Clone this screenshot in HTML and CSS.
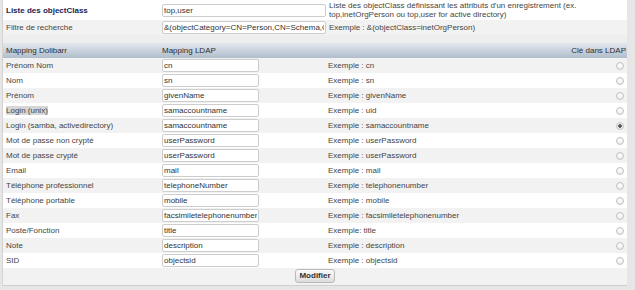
FILE: index.html
```html
<!DOCTYPE html>
<html lang="fr">
<head>
    <meta charset="UTF-8">
    <title>Configuration LDAP - Utilisateurs</title>
    <link rel="stylesheet" href="styles.css">
</head>
<body>
    <div class="panel">
        <table class="settings">
            <tr class="pair">
                <td class="label strong">Liste des objectClass</td>
                <td class="field"><input class="wide" type="text" value="top,user"></td>
                <td class="desc">Liste des objectClass définissant les attributs d'un enregistrement (ex. top,inetOrgPerson ou top,user for active directory)</td>
            </tr>
            <tr class="impair">
                <td class="label">Filtre de recherche</td>
                <td class="field"><input class="wide" type="text" value="&amp;(objectCategory=CN=Person,CN=Schema,CN=Configuration,DC=domain,DC=local)"></td>
                <td class="desc">Exemple : &amp;(objectClass=inetOrgPerson)</td>
            </tr>
        </table>

        <div class="spacer"></div>

        <table class="mapping">
            <tr class="liste_titre">
                <td class="label">Mapping Dolibarr</td>
                <td class="field">Mapping LDAP</td>
                <td class="desc"></td>
                <td class="key">Clé dans LDAP</td>
            </tr>
            <tr class="impair">
                <td class="label">Prénom Nom</td>
                <td class="field"><input type="text" value="cn"></td>
                <td class="desc">Exemple : cn</td>
                <td class="key"><input type="radio" name="key"></td>
            </tr>
            <tr class="pair">
                <td class="label">Nom</td>
                <td class="field"><input type="text" value="sn"></td>
                <td class="desc">Exemple : sn</td>
                <td class="key"><input type="radio" name="key"></td>
            </tr>
            <tr class="impair">
                <td class="label">Prénom</td>
                <td class="field"><input type="text" value="givenName"></td>
                <td class="desc">Exemple : givenName</td>
                <td class="key"><input type="radio" name="key"></td>
            </tr>
            <tr class="pair">
                <td class="label"><span class="marked">Login (unix)</span></td>
                <td class="field"><input type="text" value="samaccountname"></td>
                <td class="desc">Exemple : uid</td>
                <td class="key"><input type="radio" name="key"></td>
            </tr>
            <tr class="impair">
                <td class="label">Login (samba, activedirectory)</td>
                <td class="field"><input type="text" value="samaccountname"></td>
                <td class="desc">Exemple : samaccountname</td>
                <td class="key"><input type="radio" name="key" checked></td>
            </tr>
            <tr class="pair">
                <td class="label">Mot de passe non crypté</td>
                <td class="field"><input type="text" value="userPassword"></td>
                <td class="desc">Exemple : userPassword</td>
                <td class="key"><input type="radio" name="key"></td>
            </tr>
            <tr class="impair">
                <td class="label">Mot de passe crypté</td>
                <td class="field"><input type="text" value="userPassword"></td>
                <td class="desc">Exemple : userPassword</td>
                <td class="key"><input type="radio" name="key"></td>
            </tr>
            <tr class="pair">
                <td class="label">Email</td>
                <td class="field"><input type="text" value="mail"></td>
                <td class="desc">Exemple : mail</td>
                <td class="key"><input type="radio" name="key"></td>
            </tr>
            <tr class="impair">
                <td class="label">Téléphone professionnel</td>
                <td class="field"><input type="text" value="telephoneNumber"></td>
                <td class="desc">Exemple : telephonenumber</td>
                <td class="key"><input type="radio" name="key"></td>
            </tr>
            <tr class="pair">
                <td class="label">Téléphone portable</td>
                <td class="field"><input type="text" value="mobile"></td>
                <td class="desc">Exemple : mobile</td>
                <td class="key"><input type="radio" name="key"></td>
            </tr>
            <tr class="impair">
                <td class="label">Fax</td>
                <td class="field"><input type="text" value="facsimiletelephonenumber"></td>
                <td class="desc">Exemple : facsimiletelephonenumber</td>
                <td class="key"><input type="radio" name="key"></td>
            </tr>
            <tr class="pair">
                <td class="label">Poste/Fonction</td>
                <td class="field"><input type="text" value="title"></td>
                <td class="desc">Exemple: title</td>
                <td class="key"><input type="radio" name="key"></td>
            </tr>
            <tr class="impair">
                <td class="label">Note</td>
                <td class="field"><input type="text" value="description"></td>
                <td class="desc">Exemple : description</td>
                <td class="key"><input type="radio" name="key"></td>
            </tr>
            <tr class="pair">
                <td class="label">SID</td>
                <td class="field"><input type="text" value="objectsid"></td>
                <td class="desc">Exemple : objectsid</td>
                <td class="key"><input type="radio" name="key"></td>
            </tr>
        </table>

        <div class="actions">
            <button type="submit">Modifier</button>
        </div>
    </div>
</body>
</html>
```

FILE: styles.css
```css
body {
    margin: 0;
    background: #e6e6e6;
    font-family: "Liberation Sans", Arial, sans-serif;
    font-size: 8px;
    color: #454545;
}
.panel {
    width: 624px;
    margin-left: 2px;
    background: #efefef;
    border-left: 1px solid #d4d4d4;
    border-bottom: 1px solid #cfcfcf;
}
table {
    width: 100%;
    border-collapse: collapse;
}
td {
    padding: 0 0 0 3px;
    white-space: nowrap;
}
tr.pair {
    background: #ffffff;
}
tr.impair {
    background: #f2f2f2;
}
.label {
    width: 153px;
}
.field {
    width: 163px;
}
.strong {
    font-weight: bold;
    color: #1c1c54;
}
.settings tr.pair td {
    height: 20px;
}
.settings tr.impair td {
    height: 15px;
}
.settings .desc {
    white-space: normal;
    line-height: 9px;
    padding-right: 30px;
}
.spacer {
    height: 8px;
    background: #eeeeee;
}
.mapping td {
    height: 15px;
}
.liste_titre td {
    background: linear-gradient(#e3e8ee, #b1bdcc);
    color: #2e2e2e;
    height: 15px;
}
.key {
    text-align: right;
    padding-right: 1px;
}
input[type="text"] {
    box-sizing: border-box;
    width: 97px;
    height: 13px;
    padding: 0 1px;
    border: 1px solid #cdcdcd;
    border-radius: 2px;
    font-family: "Liberation Sans", Arial, sans-serif;
    font-size: 8px;
    color: #333;
    background: #fff;
    vertical-align: middle;
}
input.wide {
    width: 164px;
}
input[type="radio"] {
    appearance: none;
    width: 8px;
    height: 8px;
    margin: 0 2px 0 0;
    border: 1px solid #c4c4c4;
    border-radius: 50%;
    background: radial-gradient(circle at 50% 35%, #ffffff, #e4e4e4);
    vertical-align: middle;
}
input[type="radio"]:checked {
    background: radial-gradient(circle, #555 0, #555 1.5px, #e8e8e8 2px, #f6f6f6 4px);
}
.marked {
    background: #d6d6d6;
}
.actions {
    text-align: center;
    padding: 1px 0 2px;
    height: 14px;
    background: #f2f2f2;
}
button {
    height: 14px;
    padding: 0 3px;
    border: 1px solid #b9b9b9;
    border-radius: 3px;
    background: linear-gradient(#fbfbfb, #dcdcdc);
    font-family: "Liberation Sans", Arial, sans-serif;
    font-size: 8px;
    font-weight: bold;
    color: #333;
    line-height: 12px;
    vertical-align: top;
}
```
